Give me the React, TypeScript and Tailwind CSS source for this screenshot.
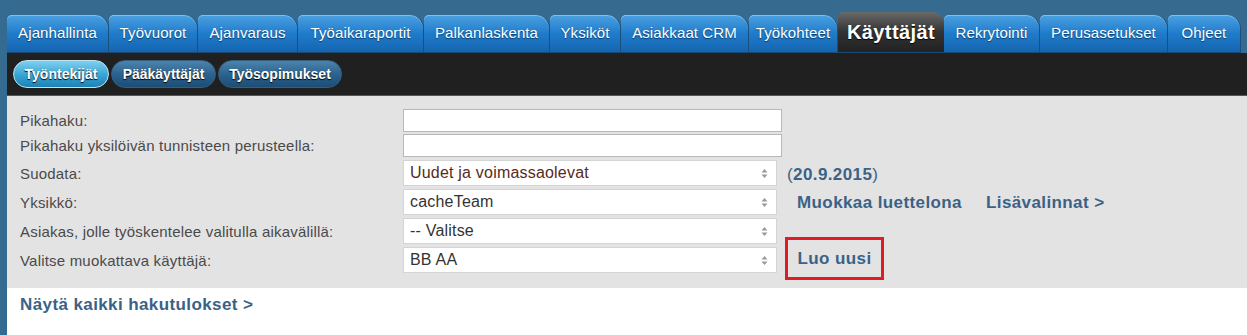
import React from "react";

const TABS = [
  { label: "Ajanhallinta", w: 102 },
  { label: "Työvuorot", w: 89 },
  { label: "Ajanvaraus", w: 100 },
  { label: "Työaikaraportit", w: 126 },
  { label: "Palkanlaskenta", w: 126 },
  { label: "Yksiköt", w: 71 },
  { label: "Asiakkaat CRM", w: 128 },
  { label: "Työkohteet", w: 89 },
  { label: "Käyttäjät", w: 106, active: true },
  { label: "Rekrytointi", w: 96 },
  { label: "Perusasetukset", w: 128 },
  { label: "Ohjeet", w: 73 },
];

const SUBTABS = [
  { label: "Työntekijät", w: 96, active: true },
  { label: "Pääkäyttäjät", w: 105 },
  { label: "Työsopimukset", w: 124 },
];

function Tab({ label, w, active }: { label: string; w: number; active?: boolean }) {
  if (active) {
    return (
      <div
        className="flex h-[40px] shrink-0 items-center justify-center rounded-tl-[5px] rounded-tr-[12px] bg-gradient-to-b from-[#6a6a6a] via-[#333] to-[#222] text-[20px] font-bold tracking-[0.4px] text-white [text-shadow:0_1px_1px_#000]"
        style={{ width: w }}
      >
        {label}
      </div>
    );
  }
  return (
    <div
      className="flex h-[37px] shrink-0 items-center justify-center rounded-tl-[5px] rounded-tr-[14px] border-r border-[#1a4f80] bg-gradient-to-b from-[#4aa0e0] via-[#1f7ccb] to-[#1565b0] text-[15px] tracking-[0.1px] text-white shadow-[inset_0_1px_0_#7cc0f0] [text-shadow:0_1px_1px_#0b3a66]"
      style={{ width: w }}
    >
      {label}
    </div>
  );
}

function SubTab({ label, w, active }: { label: string; w: number; active?: boolean }) {
  return (
    <div
      className={
        "flex h-[28px] shrink-0 items-center justify-center rounded-full border text-[14px] font-bold text-white [text-shadow:0_1px_1px_#000] " +
        (active
          ? "border-[#bfe6f5] bg-gradient-to-b from-[#7fd0ee] via-[#3aa8d6] to-[#1c82b6]"
          : "border-[#335f80] bg-gradient-to-b from-[#4d84ad] via-[#2b6390] to-[#1c4d75]")
      }
      style={{ width: w }}
    >
      {label}
    </div>
  );
}

function TextInput() {
  return <div className="h-[23px] w-[379px] border border-[#b8b8b8] bg-white" />;
}

function Select({ value, red }: { value: string; red?: boolean }) {
  return (
    <div className="flex h-[26px] w-[374px] items-center justify-between border border-[#d4d4d4] bg-white pl-[6px] pr-[8px]">
      <span className={"text-[16px] tracking-[0.2px] " + (red ? "text-[#5a2a1a]" : "text-[#333]")}>{value}</span>
      <svg width="7" height="11" viewBox="0 0 7 11">
        <path d="M3.5 1 L6.5 4.5 H0.5 Z" fill="#999" />
        <path d="M3.5 10 L6.5 6.5 H0.5 Z" fill="#999" />
      </svg>
    </div>
  );
}

const linkCls = "font-bold text-[17px] tracking-[0.4px] text-[#3b6286]";
const labelCls = "w-[383px] pt-[3px]";

export default function App() {
  return (
    <div className="flex h-[335px] w-[1247px] overflow-hidden bg-white font-['Liberation_Sans',Arial,sans-serif]">
      <div className="w-[7px] shrink-0 bg-[#356a91]" />
      <div className="flex flex-1 flex-col">
        <div className="flex h-[53px] items-end bg-[#366a8f]">
          <div className="flex items-end border-b border-[#1d4a72]">
            {TABS.map((t) => (
              <Tab key={t.label} {...t} />
            ))}
          </div>
        </div>
        <div className="flex h-[43px] items-center gap-[2px] border-b border-[#555] bg-[#202020] pl-[6px]">
          {SUBTABS.map((t) => (
            <SubTab key={t.label} {...t} />
          ))}
        </div>
        <div className="flex h-[192px] flex-col bg-[#e3e3e3] pl-[13px] pt-[13px] text-[15px] tracking-[0.2px] text-[#4a4a4a]">
          <div className="flex h-[25px] items-start">
            <span className="w-[383px] pt-[1px]">Pikahaku:</span>
            <TextInput />
          </div>
          <div className="flex h-[26px] items-start">
            <span className="w-[383px] pt-[1px]">Pikahaku yksilöivän tunnisteen perusteella:</span>
            <TextInput />
          </div>
          <div className="flex h-[29px] items-start">
            <span className={labelCls}>Suodata:</span>
            <Select value="Uudet ja voimassaolevat" red />
            <span className="ml-[10px] pt-[2px] text-[17px] tracking-[0.4px] text-[#3b6286]">
              (<b>20.9.2015</b>)
            </span>
          </div>
          <div className="flex h-[29px] items-start">
            <span className={labelCls}>Yksikkö:</span>
            <Select value="cacheTeam" />
            <span className={linkCls + " ml-[20px] pt-[1px]"}>Muokkaa luettelona</span>
            <span className={linkCls + " ml-[24px] pt-[1px]"}>Lisävalinnat &gt;</span>
          </div>
          <div className="flex h-[29px] items-start">
            <span className={labelCls}>Asiakas, jolle työskentelee valitulla aikavälillä:</span>
            <Select value="-- Valitse" />
          </div>
          <div className="flex h-[29px] items-start">
            <span className={labelCls}>Valitse muokattava käyttäjä:</span>
            <Select value="BB AA" />
            <div className="-mt-[10px] ml-[8px] flex h-[43px] w-[99px] items-center justify-center border-[3px] border-[#e01b24]">
              <span className={linkCls}>Luo uusi</span>
            </div>
          </div>
        </div>
        <div className="pl-[13px] pt-[4px]">
          <span className={linkCls}>Näytä kaikki hakutulokset &gt;</span>
        </div>
      </div>
    </div>
  );
}
